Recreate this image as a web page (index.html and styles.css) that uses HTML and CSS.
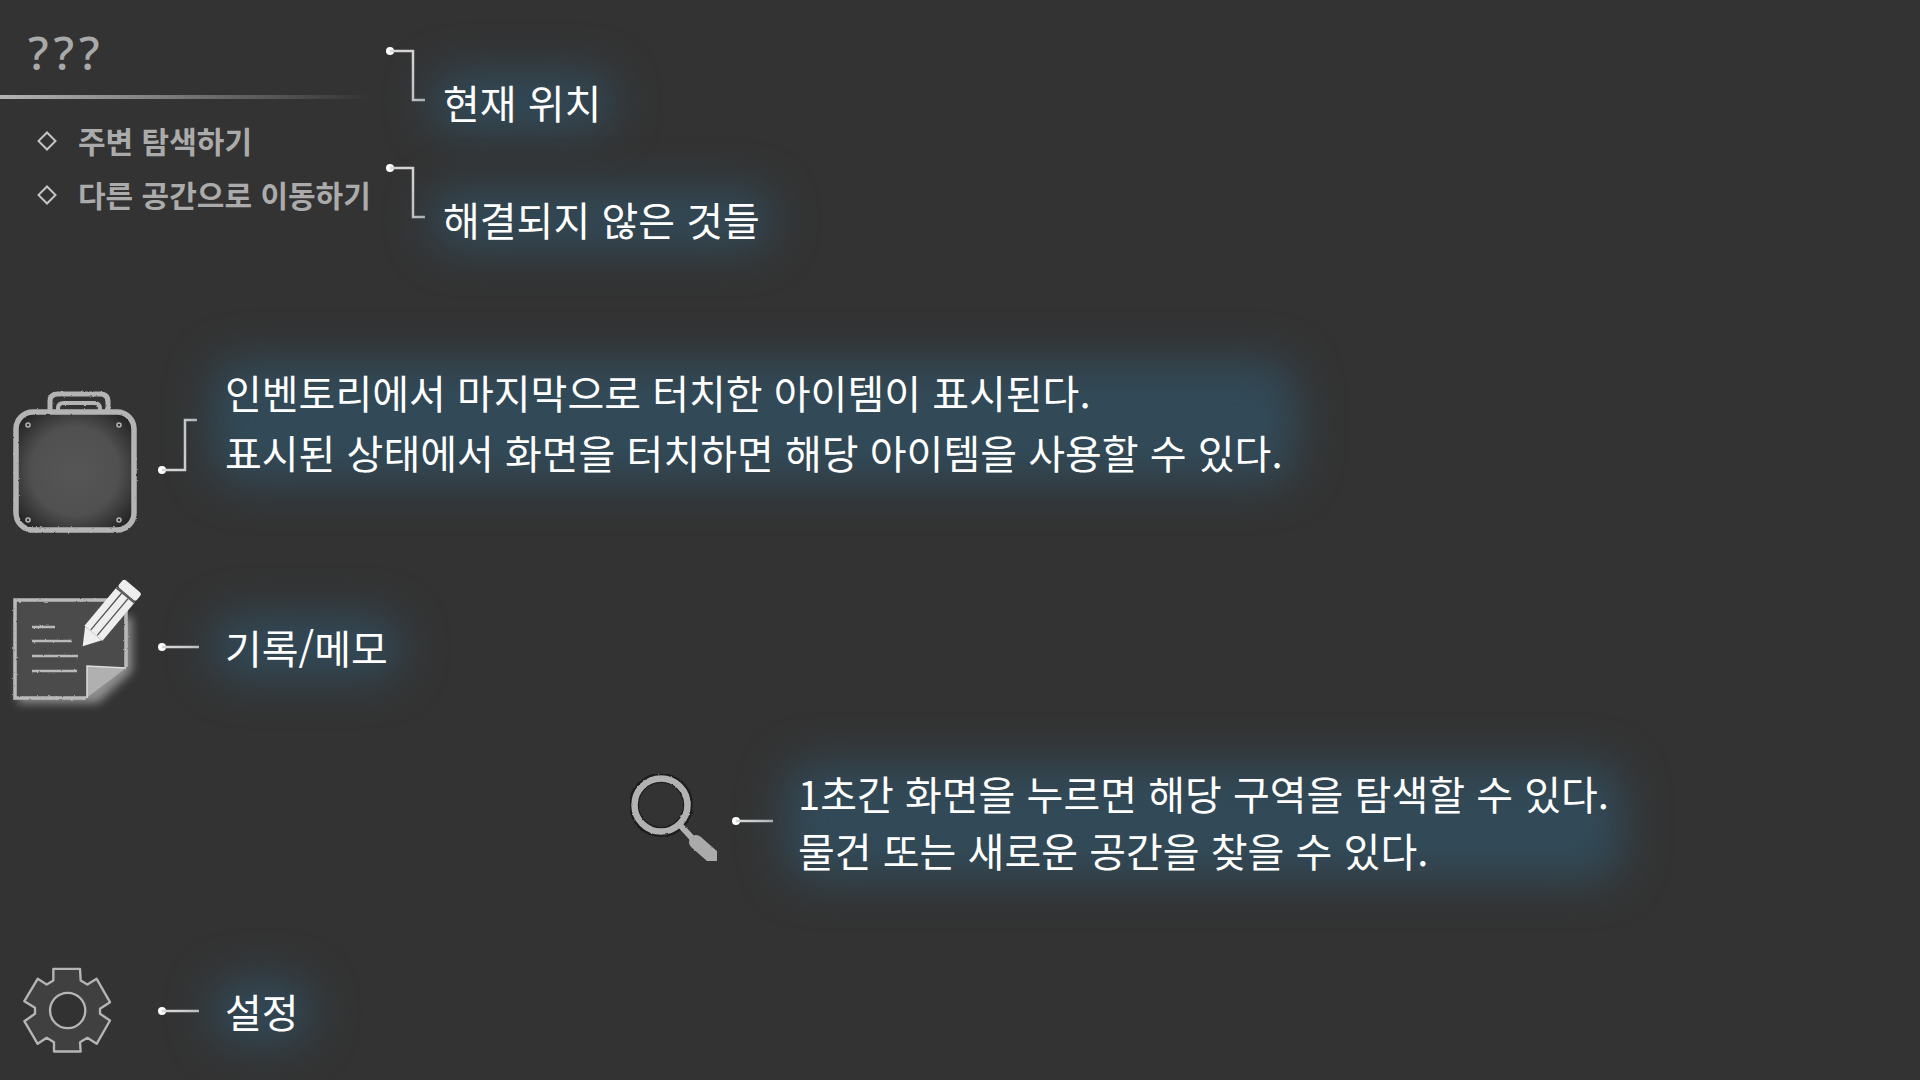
FILE: index.html
```html
<!DOCTYPE html>
<html lang="ko">
<head>
<meta charset="utf-8">
<title>튜토리얼</title>
<link rel="stylesheet" href="styles.css">
</head>
<body>
<svg class="defs" width="0" height="0" aria-hidden="true">
  <defs>
    <filter id="chalk" x="-5%" y="-5%" width="110%" height="110%">
      <feTurbulence type="fractalNoise" baseFrequency="0.35" numOctaves="2" seed="4"/>
      <feDisplacementMap in="SourceGraphic" scale="2.2" xChannelSelector="R" yChannelSelector="G"/>
    </filter>
    <radialGradient id="bagFill" cx="50%" cy="50%" r="68%">
      <stop offset="0" stop-color="#565656"/>
      <stop offset="0.55" stop-color="#505050"/>
      <stop offset="1" stop-color="#1a1a1a"/>
    </radialGradient>
    <filter id="soft" x="-20%" y="-20%" width="140%" height="140%">
      <feGaussianBlur stdDeviation="5"/>
    </filter>
  </defs>
</svg>

<main class="screen">
  <section class="top">
    <div class="status">
      <h1 class="place">???</h1>
      <div class="rule"></div>
      <ul class="actions">
        <li class="action"><span class="mark"></span><span class="action-label">주변 탐색하기</span></li>
        <li class="action"><span class="mark"></span><span class="action-label">다른 공간으로 이동하기</span></li>
      </ul>
    </div>
    <div class="top-notes">
      <div class="top-note">
        <svg class="link link-step" viewBox="0 0 40 56"><circle cx="5" cy="5" r="4"/><path d="M5 5H28V54H40"/></svg>
        <p class="note note-short"><span class="glow">현재 위치</span></p>
      </div>
      <div class="top-note">
        <svg class="link link-step" viewBox="0 0 40 56"><circle cx="5" cy="5" r="4"/><path d="M5 5H28V54H40"/></svg>
        <p class="note note-short"><span class="glow">해결되지 않은 것들</span></p>
      </div>
    </div>
  </section>

  <section class="row row-bag">
    <svg class="icon icon-bag" viewBox="0 0 130 150">
      <rect x="6" y="24" width="118" height="118" rx="17" fill="url(#bagFill)"/>
      <g filter="url(#chalk)" fill="none" stroke="#b4b4b4">
        <path stroke-width="5" d="M40 24V13Q40 6 48 6H90Q98 6 98 14V24"/>
        <path stroke-width="4" d="M48 24V20Q48 15 54 15H84Q90 15 90 21V24"/>
        <rect x="6" y="24" width="118" height="118" rx="17" stroke-width="5.5"/>
      </g>
      <g fill="#333" stroke="#b4b4b4" stroke-width="1.5">
        <circle cx="18" cy="37" r="2"/><circle cx="109" cy="37" r="2"/>
        <circle cx="18" cy="132" r="2"/><circle cx="109" cy="132" r="2"/>
      </g>
    </svg>
    <svg class="link link-bag" viewBox="0 0 40 58"><circle cx="5" cy="53" r="4"/><path d="M5 53H28V3H40"/></svg>
    <p class="note note-long"><span class="glow">인벤토리에서 마지막으로 터치한 아이템이 표시된다.<br>표시된 상태에서 화면을 터치하면 해당 아이템을 사용할 수 있다.</span></p>
  </section>

  <section class="row row-memo">
    <svg class="icon icon-memo" viewBox="0 0 130 140">
      <path d="M116 112 90 136 10 136V50H124V104Z" fill="#fff" opacity=".45" filter="url(#soft)"/>
      <path d="M7 33H118V100L78 132H7Z" fill="#4b4b4b"/>
      <g filter="url(#chalk)" fill="none" stroke="#b9b9b9">
        <path stroke-width="3.5" d="M78 131H7V33H118V100"/>
        <path stroke-width="2.5" d="M24 60H47M24 74H64M24 89H70M24 104H69"/>
      </g>
      <path d="M79 99 118 101 79 131Z" fill="#b0b0b0"/>
      <path d="M79 131V99L118 101" fill="none" stroke="#ddd" stroke-width="1.5"/>
      <g transform="translate(79 74) rotate(40) scale(.84)">
        <path d="M-13 -12 13 -12 0 8Z" fill="#eee"/>
        <rect x="-14" y="-72" width="28" height="60" fill="#eee"/>
        <path d="M-5 -70V-13M5 -70V-13" stroke="#555" stroke-width="1.6"/>
        <path d="M-14 -71H14" stroke="#555" stroke-width="2"/>
        <rect x="-14" y="-85" width="28" height="12" rx="3" fill="#eee"/>
      </g>
    </svg>
    <svg class="link link-line" viewBox="0 0 42 10"><circle cx="4" cy="5" r="4"/><path d="M4 5H41"/></svg>
    <p class="note note-single"><span class="glow">기록/메모</span></p>
  </section>

  <section class="row row-search">
    <svg class="icon icon-search" viewBox="0 0 100 100">
      <g filter="url(#chalk)" fill="none" stroke-linecap="round">
        <circle cx="41" cy="38" r="27" stroke="#1e1e1e" stroke-width="10"/>
        <circle cx="41" cy="38" r="26.5" stroke="#b2b2b2" stroke-width="6.5"/>
        <path d="M60 58 72 71" stroke="#b2b2b2" stroke-width="6"/>
        <path d="M76 75 93 90" stroke="#aaa" stroke-width="14"/>
      </g>
    </svg>
    <svg class="link link-line" viewBox="0 0 42 10"><circle cx="4" cy="5" r="4"/><path d="M4 5H41"/></svg>
    <p class="note note-search"><span class="glow">1초간 화면을 누르면 해당 구역을 탐색할 수 있다.<br>물건 또는 새로운 공간을 찾을 수 있다.</span></p>
  </section>

  <section class="row row-gear">
    <svg class="icon icon-gear" viewBox="60 40 285 280">
      <g filter="url(#chalk)" stroke="#b5b5b5" stroke-linejoin="round">
        <path fill="#404040" stroke-width="7" d="M160 55H240L242 90 262 102 290 85 330 155 300 175V190L330 210 290 280 262 262 240 275 242 303H162L162 275 140 262 113 280 73 212 105 190V172L73 152 113 85 140 102 160 90Z"/>
        <circle cx="203" cy="180" r="53" fill="#333" stroke-width="7"/>
      </g>
    </svg>
    <svg class="link link-line" viewBox="0 0 42 10"><circle cx="4" cy="5" r="4"/><path d="M4 5H41"/></svg>
    <p class="note note-single"><span class="glow">설정</span></p>
  </section>
</main>
</body>
</html>
```

FILE: styles.css
```css
* { box-sizing: border-box; }
html, body { margin: 0; padding: 0; background: #333333; }
.defs { position: absolute; }
.screen {
  width: 1920px;
  height: 1080px;
  overflow: hidden;
  display: flex;
  flex-direction: column;
  color: #fff;
  font-family: "Noto Sans CJK KR", "Noto Sans", sans-serif;
}

/* top */
.top { display: flex; height: 370px; flex: none; }
.status { width: 385px; flex: none; padding-top: 22px; }
.place {
  margin: 0 0 0 28px;
  height: 73px;
  font: 500 46px/60px "Noto Sans", sans-serif;
  letter-spacing: 5px;
  color: #a9a9a9;
}
.rule {
  width: 370px;
  height: 4px;
  background: linear-gradient(to right, #b4b4b4, #7c7c7c 45%, rgba(100,100,100,0) 100%);
}
.actions { list-style: none; margin: 15px 0 0; padding: 0 0 0 40px; }
.action {
  display: flex;
  align-items: center;
  gap: 24px;
  height: 54px;
  font-size: 30px;
  font-weight: 700;
  color: #ababab;
  white-space: nowrap;
}
.action-label { margin-top: -2px; }
.mark {
  width: 14px;
  height: 14px;
  flex: none;
  border: 2px solid #c4c4c4;
  transform: rotate(45deg);
}
.top-notes { display: flex; flex-direction: column; gap: 61px; padding-top: 46px; }
.top-note { display: flex; align-items: flex-start; height: 56px; }

/* connectors */
.link { flex: none; fill: #fff; stroke: none; overflow: visible; }
.link path { fill: none; stroke: #d6d6d6; stroke-width: 2.5; }
.link-step { width: 40px; height: 56px; }
.link-bag { width: 40px; height: 58px; margin-top: 29px; margin-left: 17px; }
.link-line { width: 42px; height: 10px; }

/* rows */
.row { display: flex; flex: none; }
.icon { flex: none; display: block; overflow: visible; }
.row-bag { height: 172px; margin-top: 18px; padding-left: 10px; }
.icon-bag { width: 130px; height: 150px; }
.row-memo { height: 140px; margin-top: 7px; padding-left: 8px; align-items: flex-start; }
.icon-memo { width: 130px; height: 140px; }
.row-memo .link-line { margin-left: 20px; margin-top: 75px; }
.row-search { height: 100px; margin-top: 60px; padding-left: 620px; align-items: center; }
.icon-search { width: 100px; height: 100px; }
.row-search .link-line { margin-left: 12px; margin-top: 8px; }
.row-gear { height: 95px; margin-top: 96px; padding-left: 20px; align-items: center; }
.icon-gear { width: 95px; height: 95px; }
.row-gear .link-line { margin-left: 43px; }

/* labels */
.note {
  margin: 0;
  font-size: 40px;
  line-height: 60px;
  font-weight: 400;
  white-space: nowrap;
  flex: none;
}
.note-short { margin-top: 28px; margin-left: 18px; line-height: 56px; }
.note-long { margin-left: 28px; margin-top: -26px; }
.note-single { margin-left: 25px; }
.row-memo .note-single { margin-top: 50px; }
.note-search { margin-left: 24px; margin-top: 10px; line-height: 57px; }
.glow { position: relative; display: inline-block; z-index: 0; }
.glow::before {
  content: "";
  position: absolute;
  inset: -2px -14px;
  z-index: -1;
  border-radius: 30px;
  background: #324a58;
  filter: blur(22px);
}
```
